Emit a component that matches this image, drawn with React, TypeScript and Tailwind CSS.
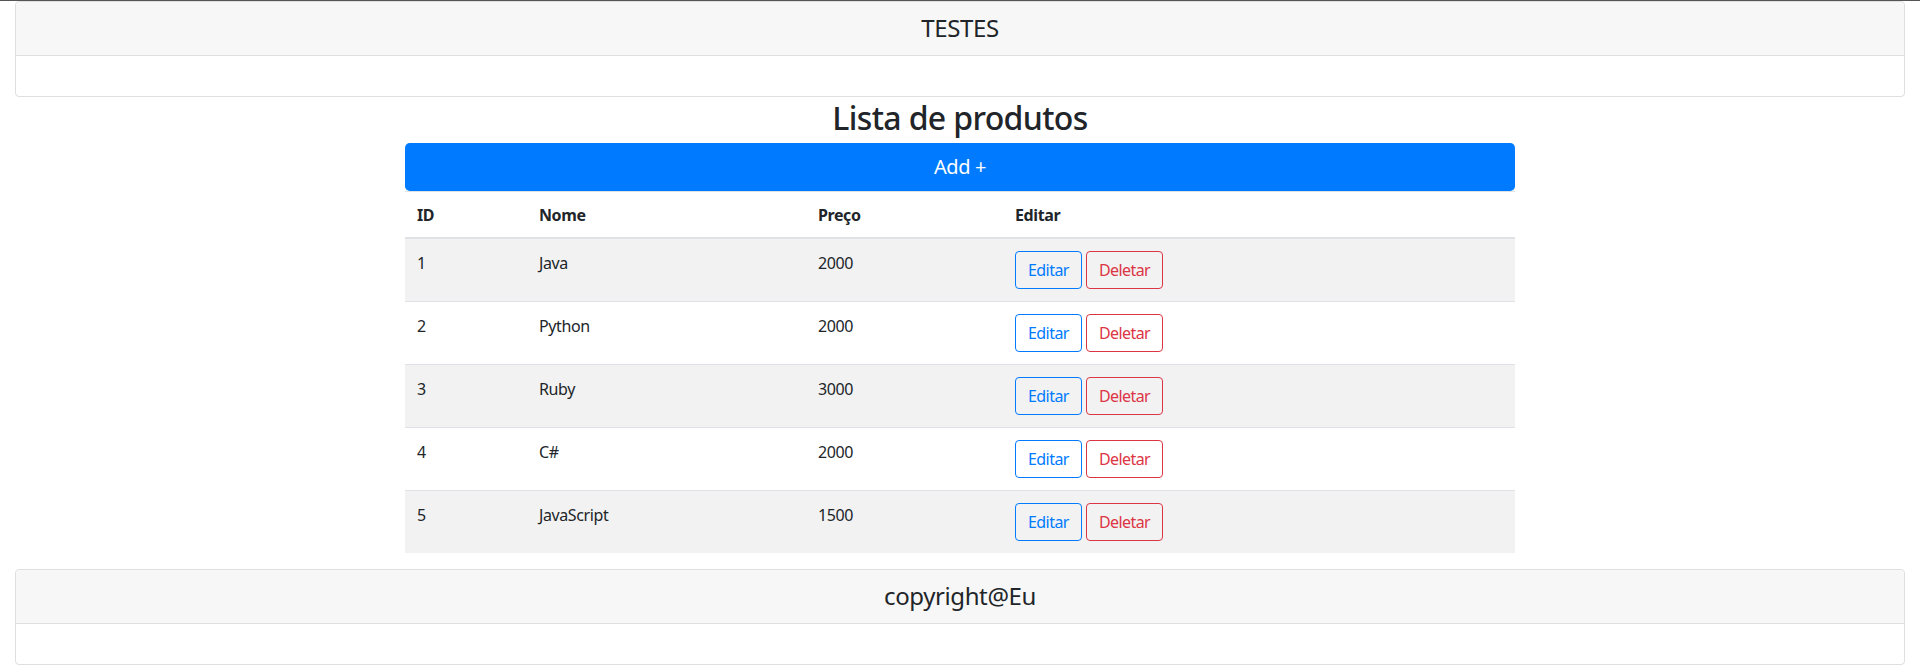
import React from "react";

const produtos = [
  { id: 1, nome: "Java", preco: 2000 },
  { id: 2, nome: "Python", preco: 2000 },
  { id: 3, nome: "Ruby", preco: 3000 },
  { id: 4, nome: "C#", preco: 2000 },
  { id: 5, nome: "JavaScript", preco: 1500 },
];

function Card({ title }: { title: string }) {
  return (
    <div className="border border-[#dfdfdf] rounded bg-white">
      <div className="bg-[#f7f7f7] border-b border-[#dfdfdf] px-5 py-3 rounded-t">
        <h4 className="text-2xl leading-[1.2] text-center font-normal">{title}</h4>
      </div>
      <div className="p-5"></div>
    </div>
  );
}

export default function App() {
  return (
    <div className="min-h-screen bg-white text-[#212529] text-base leading-6 tracking-[-0.025em] font-['Segoe_UI','Noto_Sans',sans-serif]">
      <div className="h-px bg-[#555]" />

      <div className="px-[15px]">
        <Card title="TESTES" />
      </div>

      <div className="w-[1140px] mx-auto px-[15px]">
        <h2 className="text-[32px] leading-[1.2] font-medium text-center tracking-[-0.02em] pt-[2px] mb-[6px]">
          Lista de produtos
        </h2>

        <button className="w-full h-12 bg-[#007bff] text-white text-xl leading-[1.5] rounded-[0.3rem]">
          Add +
        </button>

        <table className="w-full mb-4 border-separate border-spacing-0">
          <thead>
            <tr>
              <th className="w-[122px] text-left font-bold px-3 pt-[11px] pb-[10px] border-t border-b-2 border-[#dee2e6]">ID</th>
              <th className="w-[279px] text-left font-bold px-3 pt-[11px] pb-[10px] border-t border-b-2 border-[#dee2e6]">Nome</th>
              <th className="w-[197px] text-left font-bold px-3 pt-[11px] pb-[10px] border-t border-b-2 border-[#dee2e6]">Preço</th>
              <th className="text-left font-bold px-3 pt-[11px] pb-[10px] border-t border-b-2 border-[#dee2e6]">Editar</th>
            </tr>
          </thead>
          <tbody>
            {produtos.map((p, i) => (
              <tr key={p.id} className={i % 2 === 0 ? "bg-[#f2f2f2]" : ""}>
                <td className={"align-top px-3 py-3 border-[#dee2e6] " + (i > 0 ? "border-t" : "")}>{p.id}</td>
                <td className={"align-top px-3 py-3 border-[#dee2e6] " + (i > 0 ? "border-t" : "")}>{p.nome}</td>
                <td className={"align-top px-3 py-3 border-[#dee2e6] " + (i > 0 ? "border-t" : "")}>{p.preco}</td>
                <td className={"align-top px-3 py-3 border-[#dee2e6] " + (i > 0 ? "border-t" : "")}>
                  <button className="inline-block border border-[#007bff] text-[#007bff] rounded px-3 py-1.5 leading-6 tracking-[-0.035em] mr-1">
                    Editar
                  </button>
                  <button className="inline-block border border-[#dc3545] text-[#dc3545] rounded px-3 py-1.5 leading-6 tracking-[-0.035em]">
                    Deletar
                  </button>
                </td>
              </tr>
            ))}
          </tbody>
        </table>
      </div>

      <div className="px-[15px]">
        <Card title="copyright@Eu" />
      </div>
    </div>
  );
}
